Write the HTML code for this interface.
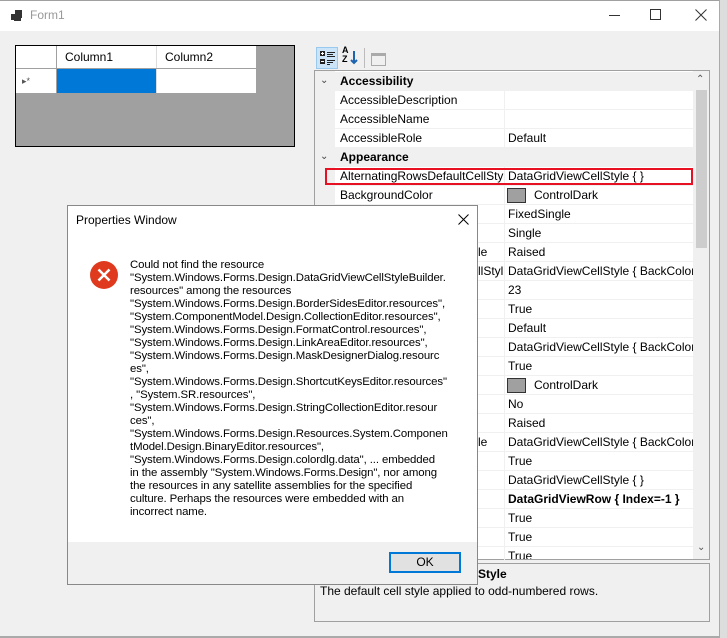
<!DOCTYPE html>
<html><head><meta charset="utf-8"><style>
*{margin:0;padding:0;box-sizing:border-box}
body{width:727px;height:638px;position:relative;overflow:hidden;background:#f0f0f0;font-family:"Liberation Sans",sans-serif;font-size:12px;color:#000}
.a{position:absolute}
.t{position:absolute;white-space:nowrap;line-height:19px}
</style></head><body>
<div class="a" style="left:0;top:0;width:727px;height:1px;background:#a0a0a0"></div>
<div class="a" style="left:0;top:1px;width:720px;height:30px;background:#fff"></div>
<div class="a" style="left:719px;top:0;width:1px;height:637px;background:#aaa"></div>
<div class="a" style="left:720px;top:0;width:7px;height:638px;background:#ddd"></div>
<div class="a" style="left:0;top:636px;width:720px;height:2px;background:#aaa"></div>
<div class="a" style="left:11px;top:14px;width:6px;height:6px;background:#333"></div>
<div class="a" style="left:15px;top:10px;width:7px;height:8px;background:#333"></div>
<div class="a" style="left:14px;top:18px;width:7px;height:3px;background:#333"></div>
<div class="t" style="left:30px;top:6px;color:#999;font-size:12px">Form1</div>
<div class="a" style="left:609px;top:15px;width:11px;height:1px;background:#333"></div>
<div class="a" style="left:650px;top:9px;width:11px;height:11px;border:1px solid #333"></div>
<svg class="a" style="left:695px;top:9px" width="12" height="12"><path d="M0.5 0.5L11.5 11.5M11.5 0.5L0.5 11.5" stroke="#333" stroke-width="1"/></svg>

<div class="a" style="left:15px;top:45px;width:280px;height:102px;background:#a0a0a0;border:1px solid #000"></div>
<div class="a" style="left:16px;top:46px;width:240px;height:47px;background:#fff"></div>
<div class="a" style="left:56px;top:46px;width:1px;height:47px;background:#a0a0a0"></div>
<div class="a" style="left:156px;top:46px;width:1px;height:47px;background:#ddd"></div>
<div class="a" style="left:16px;top:68px;width:240px;height:1px;background:#a0a0a0"></div>
<div class="a" style="left:57px;top:69px;width:99px;height:24px;background:#0078d7"></div>
<div class="t" style="left:65px;top:48px">Column1</div>
<div class="t" style="left:165px;top:48px">Column2</div>
<div class="t" style="left:22px;top:72px;font-size:9px;color:#555">▸*</div>

<div class="a" style="left:316px;top:47px;width:22px;height:22px;background:#cce4f7;border:1px solid #99c9ef"></div>
<svg class="a" style="left:320px;top:51px" width="16" height="15"><g fill="#222"><rect x="0" y="0" width="5" height="5"/><rect x="0" y="8" width="5" height="5"/><rect x="7" y="1" width="8" height="1"/><rect x="7" y="3" width="6" height="1"/><rect x="7" y="5" width="8" height="1"/><rect x="7" y="9" width="8" height="1"/><rect x="7" y="11" width="6" height="1"/><rect x="7" y="13" width="3" height="1"/></g><g fill="#fff"><rect x="2" y="1" width="1" height="3"/><rect x="1" y="2" width="3" height="1"/><rect x="1" y="10" width="3" height="1"/></g></svg>
<div class="t" style="left:342px;top:46px;font-size:9px;font-weight:bold;line-height:9px">A<br>Z</div>
<svg class="a" style="left:350px;top:51px" width="8" height="14"><path d="M4 0V12M1 9L4 12L7 9" stroke="#1c64b0" stroke-width="2" fill="none"/></svg>
<div class="a" style="left:364px;top:48px;width:1px;height:20px;background:#bbb"></div>
<div class="a" style="left:371px;top:53px;width:15px;height:13px;border:1px solid #aaa;border-top:3px solid #aaa"></div>

<div class="a" style="left:314px;top:70px;width:396px;height:490px;background:#fff;border:1px solid #a0a0a0"></div>
<div class="a" style="left:315px;top:71px;width:20px;height:488px;background:#f0f0f0"></div>
<div class="a" style="left:693px;top:71px;width:16px;height:488px;background:#f0f0f0"></div>
<div class="a" style="left:696px;top:90px;width:11px;height:158px;background:#cdcdcd"></div>
<div class="t" style="left:696px;top:70px;font-size:10px;color:#555">⌃</div>
<div class="t" style="left:697px;top:538px;font-size:10px;color:#555">⌄</div>
<div id="rows"></div>
<div class="a" style="left:325px;top:168px;width:368px;height:17px;border:2px solid #e81123"></div>

<div class="a" style="left:314px;top:563px;width:396px;height:59px;border:1px solid #a0a0a0"></div>
<div class="t" style="left:478px;top:565px;font-weight:bold">Style</div>
<div class="t" style="left:320px;top:582px">The default cell style applied to odd-numbered rows.</div>

<div class="a" style="left:67px;top:205px;width:411px;height:380px;background:#fff;border:1px solid #888"></div>
<div class="a" style="left:68px;top:542px;width:409px;height:42px;background:#f0f0f0"></div>
<div class="t" style="left:76px;top:211px">Properties Window</div>
<svg class="a" style="left:458px;top:214px" width="11" height="11"><path d="M0.5 0.5L10.5 10.5M10.5 0.5L0.5 10.5" stroke="#000" stroke-width="1"/></svg>
<svg class="a" style="left:89px;top:260px" width="30" height="30"><circle cx="15" cy="15" r="14" fill="#e03a1e"/><path d="M9.5 9.5L20.5 20.5M20.5 9.5L9.5 20.5" stroke="#fff" stroke-width="2.5"/></svg>
<div class="a" style="left:130px;top:259px;line-height:13px;font-size:11.4px;white-space:pre;letter-spacing:-0.1px">Could not find the resource
"System.Windows.Forms.Design.DataGridViewCellStyleBuilder.
resources" among the resources
"System.Windows.Forms.Design.BorderSidesEditor.resources",
"System.ComponentModel.Design.CollectionEditor.resources",
"System.Windows.Forms.Design.FormatControl.resources",
"System.Windows.Forms.Design.LinkAreaEditor.resources",
"System.Windows.Forms.Design.MaskDesignerDialog.resourc
es",
"System.Windows.Forms.Design.ShortcutKeysEditor.resources"
, "System.SR.resources",
"System.Windows.Forms.Design.StringCollectionEditor.resour
ces",
"System.Windows.Forms.Design.Resources.System.Componen
tModel.Design.BinaryEditor.resources",
"System.Windows.Forms.Design.colordlg.data", ... embedded
in the assembly "System.Windows.Forms.Design", nor among
the resources in any satellite assemblies for the specified
culture. Perhaps the resources were embedded with an
incorrect name.</div>
<div class="a" style="left:389px;top:552px;width:72px;height:21px;background:#e1e1e1;border:2px solid #0078d7;text-align:center;line-height:17px">OK</div>

<script>
var rows=[
["cat","Accessibility"],["","AccessibleDescription",""],["","AccessibleName",""],["","AccessibleRole","Default"],
["cat","Appearance"],["","AlternatingRowsDefaultCellStyl","DataGridViewCellStyle { }"],["","BackgroundColor","@ControlDark"],
["","","FixedSingle"],["","","Single"],["","le","Raised"],["","llStyl","DataGridViewCellStyle { BackColor="],["","","23"],
["","","True"],["","","Default"],["","","DataGridViewCellStyle { BackColor="],["","","True"],["","","@ControlDark"],
["","","No"],["","","Raised"],["","le","DataGridViewCellStyle { BackColor="],["","","True"],["","","DataGridViewCellStyle { }"],
["","","!DataGridViewRow { Index=-1 }"],["","","True"],["","","True"],["","","True"]];
var h="";
rows.forEach(function(r,i){
 var y=72+i*19;
 if(y>558)return;
 var clip=y+19>559?"height:"+(559-y)+"px;overflow:hidden;":"";
 if(r[0]=="cat"){
  h+='<div class="a" style="left:335px;top:'+y+'px;width:358px;height:19px;background:#f0f0f0"></div>';
  h+='<div class="t" style="left:320px;top:'+(y-1)+'px;font-size:10px;color:#444">⌄</div>';
  h+='<div class="t" style="left:340px;top:'+y+'px;font-weight:bold">'+r[1]+'</div>';
 } else {
  h+='<div class="a" style="left:335px;top:'+(y+18)+'px;width:358px;height:1px;background:#f0f0f0"></div>';
  h+='<div class="a" style="left:504px;top:'+y+'px;width:1px;height:19px;background:#f0f0f0"></div>';
  var lx=r[1].length<8?478:340;
  h+='<div class="t" style="left:'+lx+'px;top:'+y+'px;width:'+(504-lx)+'px;overflow:hidden">'+r[1]+'</div>';
  var v=r[2];
  if(v[0]=="@"){
   h+='<div class="a" style="left:507px;top:'+(y+2)+'px;width:19px;height:15px;background:#a0a0a0;border:1px solid #333"></div>';
   h+='<div class="t" style="left:534px;top:'+y+'px">'+v.slice(1)+'</div>';
  } else if(v[0]=="!"){
   h+='<div class="t" style="left:508px;top:'+y+'px;font-weight:bold">'+v.slice(1)+'</div>';
  } else h+='<div class="t" style="left:508px;top:'+y+'px;width:185px;overflow:hidden;'+clip+'">'+v+'</div>';
 }
});
document.getElementById("rows").outerHTML=h;
</script>
</body></html>
